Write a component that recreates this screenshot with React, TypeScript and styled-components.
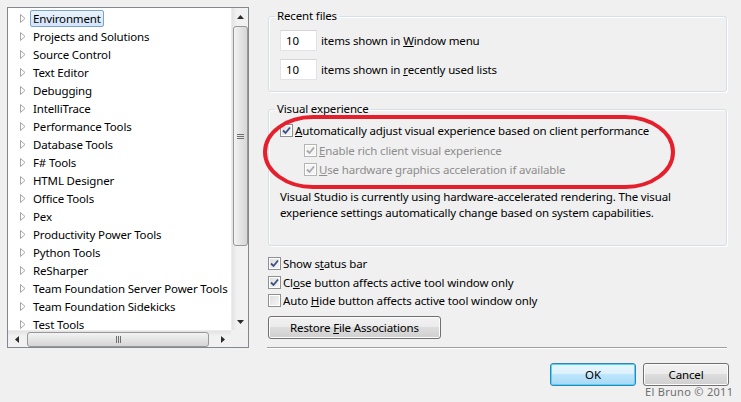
import React from 'react';
import styled, { createGlobalStyle } from 'styled-components';

const GlobalStyle = createGlobalStyle`
  html, body {
    margin: 0;
    padding: 0;
    background: #f0f0f0;
  }
  body {
    font-family: "Segoe UI", "Noto Sans", "Open Sans", sans-serif;
    font-size: 11.5px;
    letter-spacing: -0.15px;
    color: #000;
  }
`;

const Page = styled.div`
  position: relative;
  width: 741px;
  height: 402px;
  box-sizing: border-box;
  padding-top: 7px;
  display: flex;
  flex-direction: column;
  overflow: hidden;
`;

const TopRow = styled.div`
  display: flex;
  align-items: flex-start;
  height: 341px;
`;

/* ---------- tree ---------- */

const TreePanel = styled.div`
  margin-left: 7px;
  width: 242px;
  height: 341px;
  box-sizing: border-box;
  border: 1px solid #828790;
  background: #fff;
  display: grid;
  grid-template-columns: 1fr 17px;
  grid-template-rows: 1fr 17px;
`;

const TreeList = styled.div`
  overflow: hidden;
  padding-top: 1px;
`;

const TreeRow = styled.div`
  height: 18px;
  display: flex;
  align-items: center;
  padding-left: 12px;
  white-space: nowrap;
`;

const Expander = styled.svg`
  width: 6px;
  height: 9px;
  margin-right: 4px;
  flex: none;
`;

const TreeLabel = styled.span<{ $selected?: boolean }>`
  line-height: 15px;
  padding: 0 2px;
  border: 1px solid ${(p) => (p.$selected ? '#7da2ce' : 'transparent')};
  border-radius: 2px;
  background: ${(p) =>
    p.$selected ? 'linear-gradient(#eaf3fd, #d3e5fb)' : 'transparent'};
`;

const VScroll = styled.div`
  background: linear-gradient(to right, #e3e3e3, #f1f1f1 30%, #f1f1f1);
  border-left: 1px solid #ececec;
  display: flex;
  flex-direction: column;
  align-items: center;
`;

const HScroll = styled.div`
  background: linear-gradient(#e3e3e3, #f1f1f1 30%, #f1f1f1);
  border-top: 1px solid #ececec;
  display: flex;
  align-items: center;
`;

const Corner = styled.div`
  background: #f0f0f0;
`;

const ArrowBox = styled.div`
  width: 17px;
  height: 17px;
  display: flex;
  align-items: center;
  justify-content: center;
  flex: none;
`;

const Thumb = styled.div<{ $vertical?: boolean }>`
  box-sizing: border-box;
  border: 1px solid #979797;
  border-radius: 3px;
  display: flex;
  align-items: center;
  justify-content: center;
  ${(p) =>
    p.$vertical
      ? `width: 15px; height: 220px; margin-top: 1px;
         background: linear-gradient(to right, #f3f3f3, #e4e4e4 50%, #d6d6d6);`
      : `height: 15px; width: 182px; margin-left: 2px;
         background: linear-gradient(#f3f3f3, #e4e4e4 50%, #d6d6d6);`}
`;

const Spacer = styled.div`
  flex: 1;
`;

/* ---------- right side ---------- */

const RightColumn = styled.div`
  margin-left: 19px;
  width: 459px;
  display: flex;
  flex-direction: column;
  padding-top: 1px;
`;

const Group = styled.fieldset<{ $top?: number; $pt?: number; $pb?: number }>`
  position: relative;
  margin: ${(p) => p.$top ?? 0}px 0 0 0;
  padding: ${(p) => p.$pt ?? 6}px 11px ${(p) => p.$pb ?? 11}px 11px;
  border: 1px solid #d5dfe5;
  border-radius: 3px;
  box-shadow: inset 1px 1px 0 #fff, 1px 1px 0 #fff;
  min-width: 0;
`;

const Legend = styled.legend`
  padding: 0 2px;
  margin-left: -5px;
  line-height: 16px;
`;

const InputRow = styled.div`
  display: flex;
  align-items: center;
  height: 21px;
  & + & {
    margin-top: 8px;
  }
`;

const NumberBox = styled.div`
  width: 37px;
  height: 21px;
  box-sizing: border-box;
  background: #fff;
  border: 1px solid #e2e3ea;
  border-top-color: #d5d5d5;
  padding-left: 5px;
  line-height: 19px;
  margin-right: 4px;
`;

const CheckList = styled.div`
  margin-top: 8px;
`;

const CheckRow = styled.label<{ $indent?: number; $h?: number; $disabled?: boolean }>`
  display: flex;
  align-items: center;
  height: ${(p) => p.$h ?? 19}px;
  padding-left: ${(p) => p.$indent ?? 0}px;
  color: ${(p) => (p.$disabled ? '#8d8d8d' : '#000')};
  white-space: nowrap;
`;

const Box = styled.span<{ $disabled?: boolean }>`
  width: 13px;
  height: 13px;
  box-sizing: border-box;
  border: 1px solid ${(p) => (p.$disabled ? '#b4b4b4' : '#8e8f8f')};
  background: ${(p) =>
    p.$disabled ? '#f4f4f4' : 'linear-gradient(135deg, #dcdcdc, #f7f7f7)'};
  box-shadow: inset 0 0 0 1px #fff;
  margin-right: 2px;
  flex: none;
  display: flex;
  align-items: center;
  justify-content: center;
`;

const Description = styled.p`
  margin: 10px 0 0 0;
  line-height: 16px;
`;

const ButtonRow = styled.div`
  margin-top: 7px;
`;

const Button = styled.button<{ $default?: boolean; $w: number }>`
  width: ${(p) => p.$w}px;
  height: 23px;
  font: inherit;
  letter-spacing: inherit;
  color: #000;
  border-radius: 3px;
  border: 1px solid ${(p) => (p.$default ? '#3c7fb1' : '#707070')};
  background: ${(p) =>
    p.$default
      ? 'linear-gradient(#eaf6fd, #d9f0fc 50%, #bee6fd 50%, #a7d9f5)'
      : 'linear-gradient(#f2f2f2, #ebebeb 50%, #dddddd 50%, #cfcfcf)'};
  box-shadow: inset 0 0 0 1px ${(p) => (p.$default ? '#48d8fb' : '#fcfcfc')};
  padding: 0;
`;

const Separator = styled.div`
  margin-top: 8px;
  margin-left: -1px;
  height: 1px;
  background: #a0a0a0;
  box-shadow: 0 1px 0 #fff;
`;

const BottomRow = styled.div`
  margin-top: 15px;
  display: flex;
  justify-content: flex-end;
  gap: 7px;
  padding-right: 12px;
`;

const Watermark = styled.div`
  position: absolute;
  left: 645px;
  top: 384px;
  font-size: 11px;
  color: #6f6f6f;
  letter-spacing: 0.3px;
`;

const Highlight = styled.svg`
  position: absolute;
  left: -6px;
  top: -2px;
  overflow: visible;
  pointer-events: none;
`;

const treeItems = [
  'Environment',
  'Projects and Solutions',
  'Source Control',
  'Text Editor',
  'Debugging',
  'IntelliTrace',
  'Performance Tools',
  'Database Tools',
  'F# Tools',
  'HTML Designer',
  'Office Tools',
  'Pex',
  'Productivity Power Tools',
  'Python Tools',
  'ReSharper',
  'Team Foundation Server Power Tools',
  'Team Foundation Sidekicks',
  'Test Tools',
];

const Check: React.FC<{ checked?: boolean; disabled?: boolean }> = ({ checked, disabled }) => (
  <Box $disabled={disabled}>
    {checked && (
      <svg width="9" height="9" viewBox="0 0 9 9">
        <path
          d="M1 4.5 L3.5 7 L8 1.5"
          fill="none"
          stroke={disabled ? '#a9a9a9' : '#3b4f86'}
          strokeWidth="1.8"
        />
      </svg>
    )}
  </Box>
);

const Arrow: React.FC<{ dir: 'up' | 'down' | 'left' | 'right' }> = ({ dir }) => {
  const pts = {
    up: '0,4 3.5,0 7,4',
    down: '0,0 3.5,4 7,0',
    left: '4,0 0,3.5 4,7',
    right: '0,0 4,3.5 0,7',
  }[dir];
  const vert = dir === 'up' || dir === 'down';
  return (
    <ArrowBox>
      <svg width={vert ? 7 : 4} height={vert ? 4 : 7}>
        <polygon points={pts} fill="#2b2b2b" />
      </svg>
    </ArrowBox>
  );
};

const Grip: React.FC<{ vertical?: boolean }> = ({ vertical }) => (
  <svg width={7} height={7}>
    {[0, 2, 4].map((o) =>
      vertical ? (
        <line key={o} x1="0" x2="7" y1={o + 1.5} y2={o + 1.5} stroke="#6e6e6e" />
      ) : (
        <line key={o} y1="0" y2="7" x1={o + 1.5} x2={o + 1.5} stroke="#6e6e6e" />
      )
    )}
  </svg>
);

const App: React.FC = () => {
  return (
    <>
      <GlobalStyle />
      <Page>
        <TopRow>
          <TreePanel>
            <TreeList>
              {treeItems.map((t, i) => (
                <TreeRow key={t}>
                  <Expander viewBox="0 0 6 9">
                    <polygon points="0.5,0.5 5,4.5 0.5,8.5" fill="#fff" stroke="#a5a5a5" />
                  </Expander>
                  <TreeLabel $selected={i === 0}>{t}</TreeLabel>
                </TreeRow>
              ))}
            </TreeList>
            <VScroll>
              <Arrow dir="up" />
              <Thumb $vertical>
                <Grip vertical />
              </Thumb>
              <Spacer />
              <Arrow dir="down" />
            </VScroll>
            <HScroll>
              <Arrow dir="left" />
              <Thumb>
                <Grip />
              </Thumb>
              <Spacer />
              <Arrow dir="right" />
            </HScroll>
            <Corner />
          </TreePanel>

          <RightColumn>
            <Group>
              <Legend>Recent files</Legend>
              <InputRow>
                <NumberBox>10</NumberBox>
                items shown in&nbsp;<u>W</u>indow menu
              </InputRow>
              <InputRow>
                <NumberBox>10</NumberBox>
                items shown in&nbsp;<u>r</u>ecently used lists
              </InputRow>
            </Group>

            <Group $top={9} $pt={3} $pb={24}>
              <Legend>Visual experience</Legend>
              <CheckRow $h={21}>
                <Check checked />
                <span>
                  <u>A</u>utomatically adjust visual experience based on client performance
                </span>
              </CheckRow>
              <CheckRow $indent={24} $disabled>
                <Check checked disabled />
                <span>
                  <u>E</u>nable rich client visual experience
                </span>
              </CheckRow>
              <CheckRow $indent={24} $disabled>
                <Check checked disabled />
                <span>
                  <u>U</u>se hardware graphics acceleration if available
                </span>
              </CheckRow>
              <Description>
                Visual Studio is currently using hardware-accelerated rendering. The visual
                <br />
                experience settings automatically change based on system capabilities.
              </Description>
              <Highlight width="412" height="74">
                <rect
                  x="2"
                  y="2"
                  width="408"
                  height="70"
                  rx="48"
                  ry="35"
                  fill="none"
                  stroke="#e5202c"
                  strokeWidth="4"
                />
              </Highlight>
            </Group>

            <CheckList>
              <CheckRow>
                <Check checked />
                <span>
                  Show s<u>t</u>atus bar
                </span>
              </CheckRow>
              <CheckRow $h={18}>
                <Check checked />
                <span>
                  Cl<u>o</u>se button affects active tool window only
                </span>
              </CheckRow>
              <CheckRow $h={18}>
                <Check />
                <span>
                  Auto <u>H</u>ide button affects active tool window only
                </span>
              </CheckRow>
            </CheckList>
            <ButtonRow>
              <Button $w={173}>
                Restore <u>F</u>ile Associations
              </Button>
            </ButtonRow>
            <Separator />
          </RightColumn>
        </TopRow>

        <BottomRow>
          <Button $default $w={86}>
            OK
          </Button>
          <Button $w={86}>Cancel</Button>
        </BottomRow>
        <Watermark>El Bruno © 2011</Watermark>
      </Page>
    </>
  );
};

export default App;
